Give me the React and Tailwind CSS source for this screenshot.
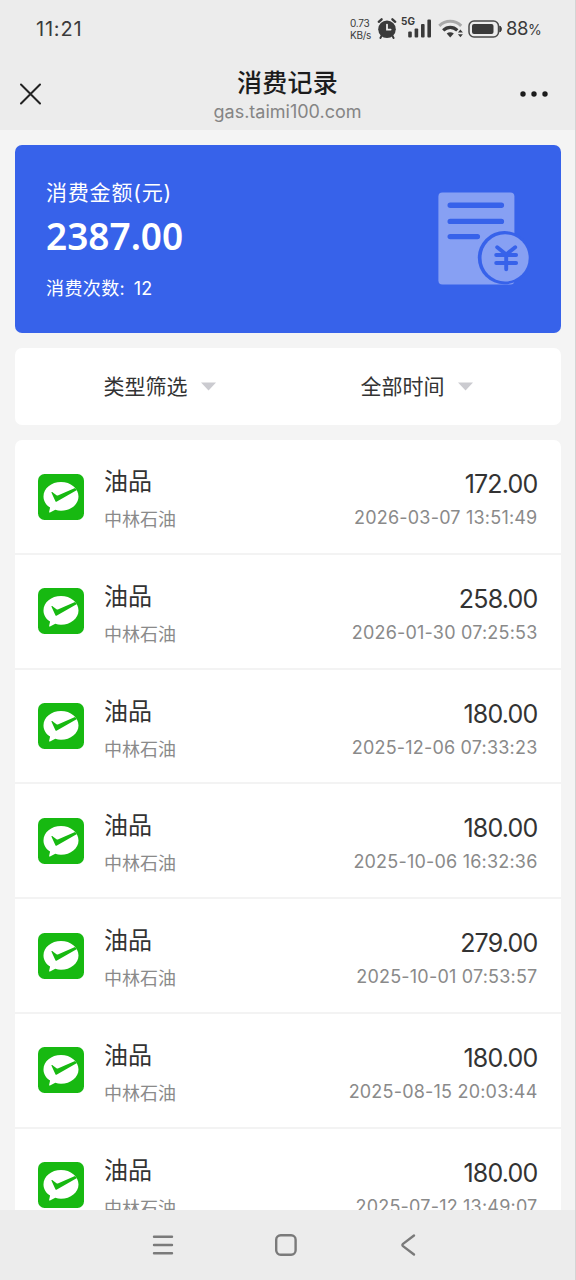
const records = [
  { amount: "172.00", time: "2026-03-07 13:51:49" },
  { amount: "258.00", time: "2026-01-30 07:25:53" },
  { amount: "180.00", time: "2025-12-06 07:33:23" },
  { amount: "180.00", time: "2025-10-06 16:32:36" },
  { amount: "279.00", time: "2025-10-01 07:53:57" },
  { amount: "180.00", time: "2025-08-15 20:03:44" },
  { amount: "180.00", time: "2025-07-12 13:49:07" },
];

function AlarmIcon() {
  return (
    <svg width="20" height="23" viewBox="0 0 20 23" fill="none" stroke="#3a3a3a" strokeLinecap="round">
      <circle cx="10" cy="12.2" r="8.8" fill="#3a3a3a" stroke="none" />
      <path d="M1.8 4.8 4.6 2.3M18.2 4.8 15.4 2.3" strokeWidth="2.4" />
      <path d="M4.8 18.6 3.4 21M15.2 18.6l1.4 2.4" strokeWidth="2" />
      <path d="M10 7.6v5h3.6" stroke="#ececec" strokeWidth="1.8" />
    </svg>
  );
}

function SignalIcon() {
  return (
    <svg width="24" height="19" viewBox="0 0 24 19" fill="#3a3a3a">
      <rect x="0.2" y="12.4" width="3.6" height="6.2" rx="1" />
      <rect x="6.6" y="9.4" width="3.6" height="9.2" rx="1" />
      <rect x="13" y="5" width="3.6" height="13.6" rx="1" />
      <rect x="19.4" y="0.6" width="3.6" height="18" rx="1" />
    </svg>
  );
}

function WifiIcon() {
  return (
    <svg width="26" height="20" viewBox="0 0 26 20" fill="none">
      <path d="M1.3 6.8C7.5 .8 17 .8 23.2 6.8" stroke="#a9a9a9" strokeWidth="3" />
      <path d="M5.2 11.4c4.2-4 10-4 14.1 0" stroke="#3a3a3a" strokeWidth="3.2" />
      <path d="M8.7 14.5c2-1.8 5-1.8 7.1 0L12.2 18.4Z" fill="#3a3a3a" />
      <path d="m19.9 13.6 2.5-3 2.5 3ZM19.9 15.3l2.5 3 2.5-3Z" fill="#3a3a3a" />
    </svg>
  );
}

function BatteryIcon() {
  return (
    <svg width="34" height="18" viewBox="0 0 34 18" fill="none">
      <rect x="1" y="1" width="29.5" height="16" rx="5" stroke="#4a4a4a" strokeWidth="1.5" />
      <rect x="4" y="4" width="21.5" height="10" rx="2" fill="#3a3a3a" />
      <path d="M31.8 6c2 .8 2 5.2 0 6Z" fill="#3a3a3a" stroke="#3a3a3a" />
    </svg>
  );
}

function PayIcon() {
  return (
    <svg className="shrink-0" width="46" height="46" viewBox="0 0 46 46">
      <rect width="46" height="46" rx="6.5" fill="#17b911" />
      <path
        d="M23 8.1C13.3 8.1 5.5 14.5 5.5 22.4c0 4.6 2.5 8.5 6.6 11.1l-1 4.4c-.1.6.4.9.9.6l5.3-2.7c1.800.6 3.700.9 5.700.9 9.7 0 17.5-6.4 17.5-14.3S32.7 8.1 23 8.1Z"
        fill="#fff"
      />
      <path
        d="M13.4 18.6c.3-.6.8-.6 1.4-.2l3.7 2.8c.6.4 1.2.4 1.9.1L37 14l2 2-20.100 11.6c-.7.4-1.2.2-1.5-.4Z"
        fill="#17b911"
      />
    </svg>
  );
}

function BillIcon() {
  return (
    <svg width="92" height="94" viewBox="0 0 92 94" fill="none" strokeLinecap="round">
      <rect x="0.4" y="0.4" width="76" height="92" rx="4" fill="#87a0f3" />
      <g stroke="#3762ea" strokeWidth="5.4">
        <path d="M12.2 13.3h51.2M12.2 29.4h51.2M12.2 44.6h27.2" />
      </g>
      <circle cx="66.4" cy="65.7" r="26.6" fill="#3762ea" />
      <circle cx="67.1" cy="65.9" r="23.6" fill="#87a0f3" />
      <g stroke="#3762ea" strokeWidth="3.9">
        <path d="m59.2 55.2 9 7.2 9-7.2M58.2 63h19.9M58.2 71h19.9M68.2 63v14.3" />
      </g>
    </svg>
  );
}

function Caret() {
  return (
    <svg width="15" height="9" viewBox="0 0 15 9">
      <path d="M0 .5h15L7.5 8.5Z" fill="#cbcbd0" />
    </svg>
  );
}

function RecordRow({ amount, time }) {
  return (
    <div className="flex h-[114.8px] shrink-0 border-b-2 border-[#f3f3f3] pl-[23px] pr-[23.5px]">
      <div className="pt-[33.5px]">
        <PayIcon />
      </div>
      <div className="flex flex-col pl-[20px] pt-[25px]">
        <span className="text-[24px] leading-[34px] text-[#333]">油品</span>
        <span className="mt-[7px] text-[18px] leading-[28px] text-[#8a8a8a]">中林石油</span>
      </div>
      <div className="ml-auto flex flex-col items-end whitespace-nowrap pt-[27px]">
        <span className="text-[25px] leading-[34px] tracking-[-0.8px] text-[#333]">{amount}</span>
        <span className="mt-[4px] text-[18px] leading-[26px] tracking-[0.2px] text-[#8a8a8a]">{time}</span>
      </div>
    </div>
  );
}

export default function App() {
  return (
    <div className="flex h-[1280px] w-[576px] flex-col overflow-hidden border-r border-[#d4d4d4] bg-[#f4f4f4] font-['Inter','Noto_Sans_CJK_SC',sans-serif]">
      <header className="h-[130px] shrink-0 bg-[#ececec]">
        <div className="flex h-[57px] items-center pl-[36px] text-[#3a3a3a]">
          <span className="text-[20px] leading-6 tracking-[0.8px]">11:21</span>
          <div className="ml-auto flex w-[225px] items-center">
            <div className="flex w-[27px] flex-col text-[10px] leading-[12px] tracking-[-0.3px]">
              <span>0.73</span>
              <span>KB/s</span>
            </div>
            <AlarmIcon />
            <div className="relative ml-[11px]">
              <SignalIcon />
              <span className="absolute -left-[7px] -top-[3px] text-[10px] font-bold leading-[10px]">5G</span>
            </div>
            <div className="ml-[6px]"><WifiIcon /></div>
            <div className="ml-[4px]"><BatteryIcon /></div>
            <div className="ml-[4px] flex items-baseline">
              <span className="text-[18.5px] leading-6 tracking-[-0.5px]">88</span>
              <span className="text-[14px] leading-6">%</span>
            </div>
          </div>
        </div>
        <div className="flex h-[73px] items-center justify-between pl-[20px] pr-[27px]">
          <svg width="21" height="22" viewBox="0 0 21 22" stroke="#222" strokeWidth="2" strokeLinecap="round">
            <path d="m1 1.5 19 19M20 1.5l-19 19" />
          </svg>
          <div className="flex flex-col items-center pl-[8px] pt-[2px]">
            <span className="pl-[6px] text-[25px] font-medium leading-[34px] tracking-[0.3px] text-[#1c1c1c]">消费记录</span>
            <span className="pl-[6px] text-[18px] leading-[24px] text-[#858585]">gas.taimi100.com</span>
          </div>
          <svg width="28" height="8" viewBox="0 0 28 8" fill="#1c1c1c">
            <circle cx="3" cy="4" r="2.7" />
            <circle cx="14" cy="4" r="2.7" />
            <circle cx="25" cy="4" r="2.7" />
          </svg>
        </div>
      </header>

      <main className="flex min-h-0 flex-1 flex-col overflow-hidden pl-[15px] pr-[14px] pt-[15px]">
        <section className="flex h-[188px] shrink-0 justify-between rounded-[7px] bg-[#3762ea] pl-[31px] pr-[31px] text-white">
          <div className="flex flex-col">
            <span className="mt-[33px] text-[21px] leading-[30px] tracking-[0.8px]">消费金额(元)</span>
            <span className="mt-[5px] font-['Noto_Sans',sans-serif] text-[37px] font-semibold leading-[46px]">2387.00</span>
            <span className="mt-[16px] text-[18px] leading-[28px] tracking-[0.4px] [word-spacing:3px]">消费次数: 12</span>
          </div>
          <div className="pt-[47px]"><BillIcon /></div>
        </section>

        <section className="mt-[15px] grid h-[77px] shrink-0 grid-cols-2 rounded-[7px] bg-white text-[21px] text-[#333]">
          <div className="flex items-center gap-[13px] pl-[88.5px]"><span className="pt-px">类型筛选</span><Caret /></div>
          <div className="flex items-center gap-[13px] pl-[72.5px]"><span className="pt-px">全部时间</span><Caret /></div>
        </section>

        <section className="mt-[15px] flex min-h-0 flex-1 flex-col overflow-hidden rounded-t-[7px] bg-white">
          {records.map((record) => (
            <RecordRow key={record.time} {...record} />
          ))}
        </section>
      </main>

      <nav className="flex h-[70px] shrink-0 items-center bg-[#ececec] pl-[152px]">
        <svg width="22" height="22" viewBox="0 0 22 22" stroke="#7a7a7a" strokeWidth="2.4" strokeLinecap="round">
          <path d="M2 2.8h18M2 11h18M2 19.2h18" />
        </svg>
        <svg className="ml-[100px]" width="24" height="24" viewBox="0 0 24 24" fill="none" stroke="#7a7a7a" strokeWidth="2.4">
          <rect x="2.2" y="2.2" width="19.4" height="19.6" rx="4.5" />
        </svg>
        <svg className="ml-[102px]" width="18" height="24" viewBox="0 0 18 24" fill="none" stroke="#7a7a7a" strokeWidth="2.4" strokeLinecap="round" strokeLinejoin="round">
          <path d="M14 2.5 3 10.900q-1.2 1.1 0 2.2L14 21.5" />
        </svg>
      </nav>
    </div>
  );
}
